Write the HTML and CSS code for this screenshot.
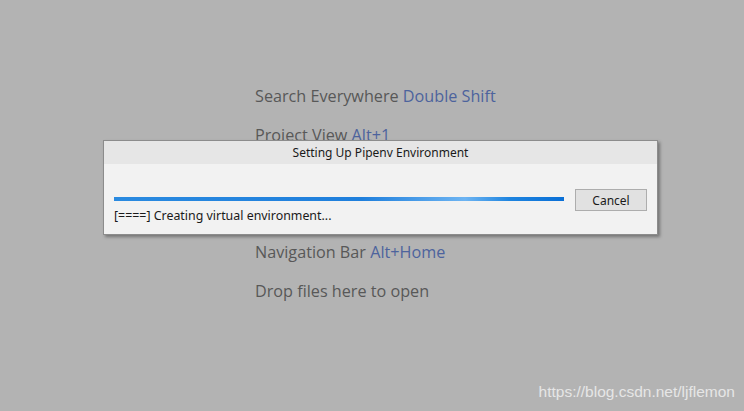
FILE: index.html
```html
<!DOCTYPE html>
<html lang="en">
    <head>
        <meta charset="utf-8">
        <title>Setting Up Pipenv Environment</title>
        <link rel="stylesheet" href="styles.css">
    </head>
    <body>
        <div class="frame">
            <ul class="hints">
                <li>Search Everywhere <span class="key">Double Shift</span></li>
                <li>Project View <span class="key">Alt+1</span></li>
                <!-- 中间两行被对话框挡住了, 这里留空位 -->
                <li class="covered"></li>
                <li class="covered"></li>
                <li>Navigation Bar <span class="key">Alt+Home</span></li>
                <li>Drop files here to open</li>
            </ul>

            <div class="dialog">
                <div class="dialog-title">Setting Up Pipenv Environment</div>
                <div class="dialog-body">
                    <div class="progress-col">
                        <div class="progress"></div>
                        <div class="status">[====] Creating virtual environment...</div>
                    </div>
                    <button class="btn">Cancel</button>
                </div>
            </div>

            <div class="watermark">https://blog.csdn.net/ljflemon</div>
        </div>
    </body>
</html>
```

FILE: styles.css
```css
html, body {
    margin: 0;
    padding: 0;
}

body {
    background: #b3b3b3;
    font-family: "Open Sans", "Noto Sans", sans-serif;
}

.frame {
    position: relative;
    width: 744px;
    height: 411px;
    overflow: hidden;
}

.hints {
    list-style: none;
    margin: 0;
    padding: 83px 0 0 255px;
    color: #585858;
    font-size: 16.2px;
}

.hints li {
    height: 39px;
    line-height: 26px;
}

.key {
    color: #4d639d;
}

/* 对话框盖在欢迎页上面, 所以这里用绝对定位 */
.dialog {
    position: absolute;
    left: 103px;
    top: 140px;
    width: 553px;
    height: 93px;
    border: 1px solid #8c8c8c;
    background: #f2f2f2;
    box-shadow: 2px 2px 3px rgba(0, 0, 0, 0.35);
    font-family: "Noto Sans", "Open Sans", sans-serif;
    font-size: 12px;
    color: #1a1a1a;
}

.dialog-title {
    height: 23px;
    line-height: 23px;
    background: #e6e6e6;
    text-align: center;
}

.dialog-body {
    display: flex;
    align-items: flex-start;
    padding: 25px 10px 0 10px;
}

.progress-col {
    width: 450px;
    padding-top: 8px;
}

.progress {
    height: 4px;
    background: linear-gradient(90deg, #2a8ae0 0%, #1f7fdc 55%, #6db4f2 78%, #1e84df 88%, #0a6fd6 100%);
}

.status {
    margin-top: 6px;
    line-height: 18px;
    font-size: 12.4px;
}

.btn {
    margin-left: 11px;
    width: 72px;
    height: 22px;
    padding: 0;
    border: 1px solid #adadad;
    background: #e1e1e1;
    font-family: inherit;
    font-size: 12px;
    color: #1a1a1a;
}

.watermark {
    position: absolute;
    right: 9px;
    bottom: 10px;
    font-family: "Liberation Sans", Arial, sans-serif;
    font-size: 15.5px;
    color: #e6e6e6;
}
```
